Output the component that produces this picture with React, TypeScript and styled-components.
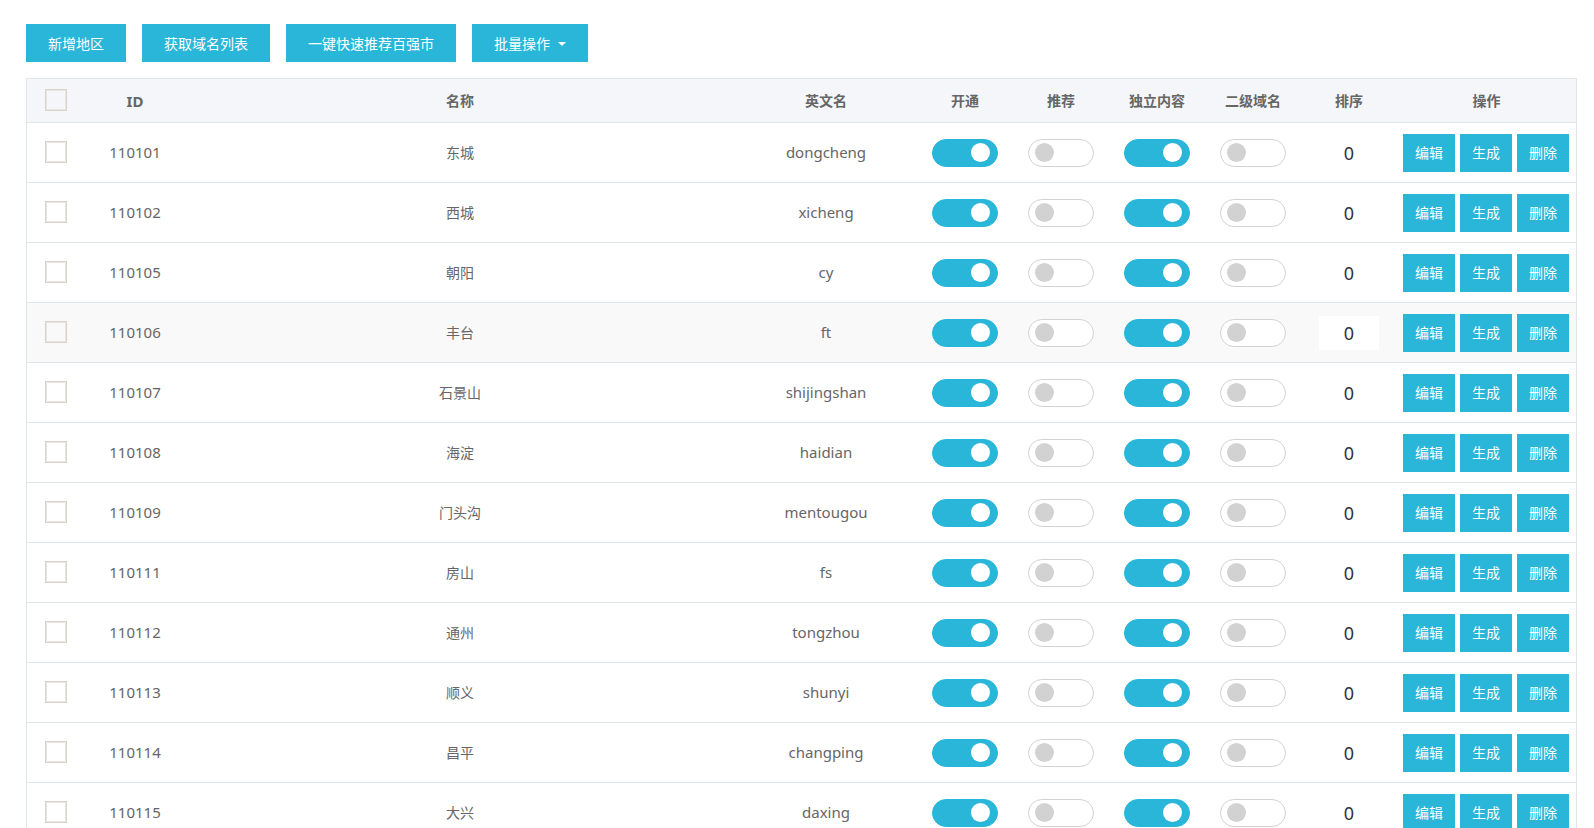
import React, { useState } from "react";
import styled, { createGlobalStyle } from "styled-components";

const ACCENT = "#29b6d8";
const LINE = "#e1e6eb";

const GlobalStyle = createGlobalStyle`
  * { box-sizing: border-box; }
  body {
    margin: 0;
    background: #fff;
    color: #666;
    font: 14px/20px "Noto Sans", "Noto Sans CJK SC", sans-serif;
  }
  button, input { font: inherit; margin: 0; }
`;

const Page = styled.main`
  padding: 24px 17px 24px 26px;
`;

const Toolbar = styled.div`
  display: flex;
  gap: 16px;
  margin-bottom: 16px;
`;

const Button = styled.button<{ $compact?: boolean }>`
  display: inline-flex;
  align-items: center;
  justify-content: center;
  gap: 8px;
  height: 38px;
  padding: ${(p) => (p.$compact ? "0 12px" : "2px 22px 0")};
  border: 0;
  background: ${ACCENT};
  color: #fff;
  white-space: nowrap;
  cursor: pointer;
`;

const Caret = styled.span`
  border: 4px solid transparent;
  border-top-color: #fff;
  border-bottom: 0;
`;

const Table = styled.table`
  width: 100%;
  table-layout: fixed;
  border: 1px solid ${LINE};
  border-collapse: separate;
  border-spacing: 0;
  text-align: center;
`;

const Col = styled.col<{ $width?: number }>`
  width: ${(p) => (p.$width ? `${p.$width}px` : "auto")};
`;

const HeadCell = styled.th<{ $latin?: boolean }>`
  height: 44px;
  padding: 0;
  border-bottom: 1px solid ${LINE};
  background: #f4f6fa;
  font-size: ${(p) => (p.$latin ? 15 : 14)}px;
  font-weight: 700;
`;

const HeadTickCell = styled(HeadCell)`
  padding-bottom: 2px;
`;

const Row = styled.tr<{ $active?: boolean }>`
  background: ${(p) => (p.$active ? "#f9f9f9" : "#fff")};
`;

const Cell = styled.td`
  padding: 11px 0 10px;
  border-bottom: 1px solid ${LINE};
`;

const TickCell = styled(Cell)`
  padding: 10px 0 11px;
`;

const LatinCell = styled(TickCell)`
  font-size: 15px;
`;

const Tick = styled.input.attrs({ type: "checkbox" })`
  appearance: none;
  display: block;
  width: 22px;
  height: 22px;
  margin: 0 auto;
  border: 1px solid #d6d2cc;
  box-shadow: inset 0 0 0 1px #e9e6e2;
  cursor: pointer;
  &:checked { background: ${ACCENT}; }
`;

const Switch = styled.input.attrs({ type: "checkbox", role: "switch" })`
  appearance: none;
  display: flex;
  width: 66px;
  height: 28px;
  margin: 0 auto;
  padding: 3px 7px 0 6px;
  border: 1px solid #d2d2d2;
  border-radius: 14px;
  background: #fff;
  cursor: pointer;
  &::before {
    content: "";
    width: 19px;
    height: 19px;
    border-radius: 50%;
    background: #d2d2d2;
  }
  &:checked {
    justify-content: flex-end;
    border-color: ${ACCENT};
    background: ${ACCENT};
  }
  &:checked::before { background: #fff; }
`;

const OrderInput = styled.input`
  display: block;
  width: 60px;
  height: 34px;
  margin: 0 auto;
  padding: 0;
  border: 0;
  background: #fff;
  color: #333;
  font-size: 18px;
  text-align: center;
`;

const Actions = styled.div`
  display: flex;
  justify-content: flex-end;
  gap: 5px;
  padding-right: 7px;
`;

const regions: [string, string, string][] = [
  ["110101", "东城", "dongcheng"],
  ["110102", "西城", "xicheng"],
  ["110105", "朝阳", "cy"],
  ["110106", "丰台", "ft"],
  ["110107", "石景山", "shijingshan"],
  ["110108", "海淀", "haidian"],
  ["110109", "门头沟", "mentougou"],
  ["110111", "房山", "fs"],
  ["110112", "通州", "tongzhou"],
  ["110113", "顺义", "shunyi"],
  ["110114", "昌平", "changping"],
  ["110115", "大兴", "daxing"],
];

const switches = [
  { label: "开通", on: true },
  { label: "推荐", on: false },
  { label: "独立内容", on: true },
  { label: "二级域名", on: false },
];

export default function App() {
  const [active, setActive] = useState("110106");
  return (
    <>
      <GlobalStyle />
      <Page>
        <Toolbar>
          <Button type="button">新增地区</Button>
          <Button type="button">获取域名列表</Button>
          <Button type="button">一键快速推荐百强市</Button>
          <Button type="button" aria-haspopup="menu">
            批量操作
            <Caret />
          </Button>
        </Toolbar>
        <Table>
          <colgroup>
            <Col $width={58} />
            <Col $width={100} />
            <Col />
            <Col $width={182} />
            {switches.map((s) => (
              <Col key={s.label} $width={96} />
            ))}
            <Col $width={96} />
            <Col $width={179} />
          </colgroup>
          <thead>
            <tr>
              <HeadTickCell>
                <Tick aria-label="全选" />
              </HeadTickCell>
              <HeadCell $latin>ID</HeadCell>
              <HeadCell>名称</HeadCell>
              <HeadCell>英文名</HeadCell>
              {switches.map((s) => (
                <HeadCell key={s.label}>{s.label}</HeadCell>
              ))}
              <HeadCell>排序</HeadCell>
              <HeadCell>操作</HeadCell>
            </tr>
          </thead>
          <tbody>
            {regions.map(([id, name, english]) => (
              <Row key={id} $active={id === active} onMouseEnter={() => setActive(id)}>
                <TickCell>
                  <Tick aria-label={name} />
                </TickCell>
                <LatinCell>{id}</LatinCell>
                <Cell>{name}</Cell>
                <LatinCell>{english}</LatinCell>
                {switches.map((s) => (
                  <Cell key={s.label}>
                    <Switch aria-label={`${name} ${s.label}`} defaultChecked={s.on} />
                  </Cell>
                ))}
                <Cell>
                  <OrderInput type="text" aria-label={`${name} 排序`} defaultValue="0" />
                </Cell>
                <Cell>
                  <Actions>
                    <Button type="button" $compact>编辑</Button>
                    <Button type="button" $compact>生成</Button>
                    <Button type="button" $compact>删除</Button>
                  </Actions>
                </Cell>
              </Row>
            ))}
          </tbody>
        </Table>
      </Page>
    </>
  );
}
